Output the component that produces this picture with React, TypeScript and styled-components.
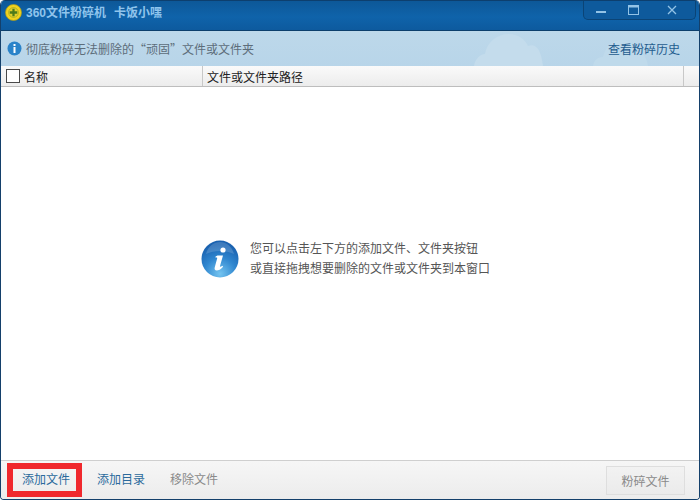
import styled, { createGlobalStyle } from 'styled-components';

const GlobalStyle = createGlobalStyle`
  html, body {
    margin: 0;
    padding: 0;
    background: #fff;
  }

  body {
    font-family: "Liberation Sans", "Noto Sans CJK SC", sans-serif;
  }
`;

const Win = styled.div`
  width: 700px;
  height: 500px;
  box-sizing: border-box;
  display: flex;
  flex-direction: column;
  overflow: hidden;
  background: #fff;
  border-left: 1px solid #14406b;
  border-right: 1px solid #14406b;
  border-bottom: 1px solid #14406b;
  border-radius: 5px 5px 4px 4px;
`;

const TitleBar = styled.header`
  flex: 0 0 31px;
  box-sizing: border-box;
  display: flex;
  align-items: flex-start;
  padding-left: 4px;
  background: linear-gradient(#0d5898, #0f63aa 55%, #0d5a9e);
  border-top: 1px solid #0d3f6e;
  border-bottom: 1px solid #0c3f6c;
`;

const Logo = styled.svg`
  width: 17px;
  height: 17px;
  margin-top: 3px;
  flex: none;
`;

const AppTitle = styled.strong`
  margin-left: 4px;
  margin-top: 4px;
  font-size: 12px;
  line-height: 17px;
  font-weight: 700;
  color: #8fc4ec;
`;

const TitleNick = styled.span`
  margin-left: 8px;
`;

const WinButtons = styled.div`
  margin-left: auto;
  margin-right: 3px;
  width: 113px;
  height: 19px;
  box-sizing: border-box;
  display: flex;
  background: #0e5a9c;
  border: 1px solid #0b4476;
  border-top: none;
  border-radius: 0 0 5px 5px;
`;

const WinButton = styled.div<{ $width: number }>`
  flex: 0 0 ${p => p.$width}px;
  display: flex;
  align-items: center;
  justify-content: center;
  color: #93c3e6;
`;

const InfoBar = styled.div`
  flex: 0 0 35px;
  position: relative;
  display: flex;
  align-items: center;
  padding: 0 19px 0 6px;
  background: linear-gradient(#bdd8ea, #b8d5e9);
`;

const Clouds = styled.svg`
  position: absolute;
  left: 472px;
  top: 0;
  width: 180px;
  height: 35px;
`;

const InfoIcon = styled.svg`
  width: 15px;
  height: 15px;
  flex: none;
  position: relative;
`;

const InfoText = styled.span`
  margin-left: 4px;
  font-family: "Noto Sans CJK SC", sans-serif;
  font-size: 12px;
  color: #5d6d7a;
  position: relative;
`;

const HistoryLink = styled.a`
  margin-left: auto;
  font-size: 12px;
  color: #1f5c8e;
  position: relative;
`;

const TableHead = styled.div`
  flex: 0 0 21px;
  box-sizing: border-box;
  display: flex;
  align-items: center;
  background: linear-gradient(#fafafa, #ececec);
  border-bottom: 1px solid #bdbdbd;
`;

const NameCell = styled.div`
  width: 202px;
  height: 100%;
  box-sizing: border-box;
  display: flex;
  align-items: center;
  padding-left: 5px;
  border-right: 1px solid #c8c8c8;
`;

const Check = styled.span`
  width: 12px;
  height: 12px;
  border: 1px solid #4a4a4a;
  background: #fff;
`;

const HeadLabel = styled.span`
  margin-left: 4px;
  font-size: 12px;
  color: #222;
`;

const PathCell = styled.div`
  flex: 1;
  height: 100%;
  display: flex;
  align-items: center;
  margin-right: 15px;
  border-right: 1px solid #c8c8c8;
  font-size: 12px;
  color: #222;
  padding-left: 4px;
`;

const Body = styled.main`
  flex: 1;
  display: flex;
  align-items: center;
  padding: 0 0 30px 199px;
`;

const BigIcon = styled.svg`
  width: 40px;
  height: 40px;
  flex: none;
`;

const Hint = styled.p`
  margin: 0 0 0 10px;
  font-size: 12px;
  line-height: 20px;
  color: #555;
`;

const Footer = styled.footer`
  flex: 0 0 39px;
  box-sizing: border-box;
  display: flex;
  align-items: center;
  padding-left: 6px;
  padding-right: 14px;
  background: linear-gradient(#f6f6f6, #ececec);
  border-top: 1px solid #cfcfcf;
`;

const ToolLink = styled.a<{ $muted?: boolean }>`
  font-size: 12px;
  line-height: 16px;
  color: ${p => (p.$muted ? '#8a8a8a' : '#2b6a9c')};
  margin-right: 25px;
`;

const MarkedLink = styled(ToolLink)`
  width: 75px;
  height: 34px;
  box-sizing: border-box;
  display: flex;
  align-items: center;
  padding-left: 9px;
  margin-right: 15px;
  border: 6px solid #f0282d;
`;

const Shred = styled.button`
  margin-left: auto;
  width: 79px;
  height: 29px;
  padding: 0;
  font: inherit;
  font-size: 12px;
  color: #8a8a8a;
  background: linear-gradient(#f2f2f2, #ebebeb);
  border: 1px solid #dedede;
`;

export default function App() {
  return (
    <>
      <GlobalStyle />
      <Win>
        <TitleBar>
          <Logo viewBox="0 0 18 18">
            <circle cx="9" cy="9" r="8.5" fill="#f0d21e" stroke="#a99a1c" strokeWidth="0.8" />
            <circle cx="9" cy="9" r="5.200" fill="#e3cf2a" stroke="#8f9a1f" strokeWidth="0.6" />
            <path d="M9 5v8M5 9h8" stroke="#4e7a1a" strokeWidth="2.4" />
          </Logo>
          <AppTitle>
            360文件粉碎机
            <TitleNick>卡饭小嘿</TitleNick>
          </AppTitle>
          <WinButtons>
            <WinButton $width={33}>
              <svg width="10" height="10" viewBox="0 0 10 10">
                <rect x="0" y="6" width="10" height="2" fill="currentColor" />
              </svg>
            </WinButton>
            <WinButton $width={32}>
              <svg width="11" height="10" viewBox="0 0 11 10">
                <rect x="0.500" y="0.500" width="10" height="9" fill="none" stroke="currentColor" />
                <rect x="0.500" y="0.500" width="10" height="2" fill="currentColor" />
              </svg>
            </WinButton>
            <WinButton $width={46}>
              <svg width="10" height="10" viewBox="0 0 10 10">
                <path d="M1 1l8 8M9 1l-8 8" stroke="currentColor" strokeWidth="1.3" />
              </svg>
            </WinButton>
          </WinButtons>
        </TitleBar>

        <InfoBar>
          <Clouds viewBox="0 0 180 35">
            <path d="M1 35c1-7 6-12 11-12 2-12 12-20 24-20 9 0 16 5 19 12 7-3 13 2 15 20z" fill="#c4dcec" />
            <path d="M120 35c1-6 5-9 10-9 2-10 10-18 20-17 8 1 12 6 14 12 6 0 10 6 11 14z" fill="#bfdaeb" />
          </Clouds>
          <InfoIcon viewBox="0 0 15 15">
            <circle cx="7.500" cy="7.500" r="7" fill="#2a83c9" />
            <rect x="6.500" y="3" width="2" height="2" fill="#fff" />
            <rect x="6.500" y="6" width="2" height="6" fill="#fff" />
          </InfoIcon>
          <InfoText>彻底粉碎无法删除的“顽固”文件或文件夹</InfoText>
          <HistoryLink>查看粉碎历史</HistoryLink>
        </InfoBar>

        <TableHead>
          <NameCell>
            <Check />
            <HeadLabel>名称</HeadLabel>
          </NameCell>
          <PathCell>文件或文件夹路径</PathCell>
        </TableHead>

        <Body>
          <BigIcon viewBox="0 0 40 40">
            <defs>
              <radialGradient id="orb" cx="50%" cy="90%" r="80%">
                <stop offset="0" stopColor="#74c4f0" />
                <stop offset="0.55" stopColor="#2f86cf" />
                <stop offset="1" stopColor="#1a62b0" />
              </radialGradient>
            </defs>
            <circle cx="20" cy="20" r="18.500" fill="url(#orb)" />
            <path d="M6 15C8 7 14 3 20 3s12 4 14 12c-8-4-20-4-28 0z" fill="#fff" opacity="0.16" />
            <circle cx="23" cy="11" r="2.600" fill="#fff" />
            <path
              d="M17.500 16.500h5.500l-3 10.500c-.3 1 .5 1.300 2.300-.3l.8 1c-2.400 2.800-4.600 3.800-6.400 3.800-1.900 0-2.400-1.300-2-2.900l2.500-9.300c.2-.9-.5-1-1.800-.7l.2-1.100z"
              fill="#fff"
            />
          </BigIcon>
          <Hint>
            您可以点击左下方的添加文件、文件夹按钮
            <br />
            或直接拖拽想要删除的文件或文件夹到本窗口
          </Hint>
        </Body>

        <Footer>
          <MarkedLink>添加文件</MarkedLink>
          <ToolLink>添加目录</ToolLink>
          <ToolLink $muted>移除文件</ToolLink>
          <Shred>粉碎文件</Shred>
        </Footer>
      </Win>
    </>
  );
}
